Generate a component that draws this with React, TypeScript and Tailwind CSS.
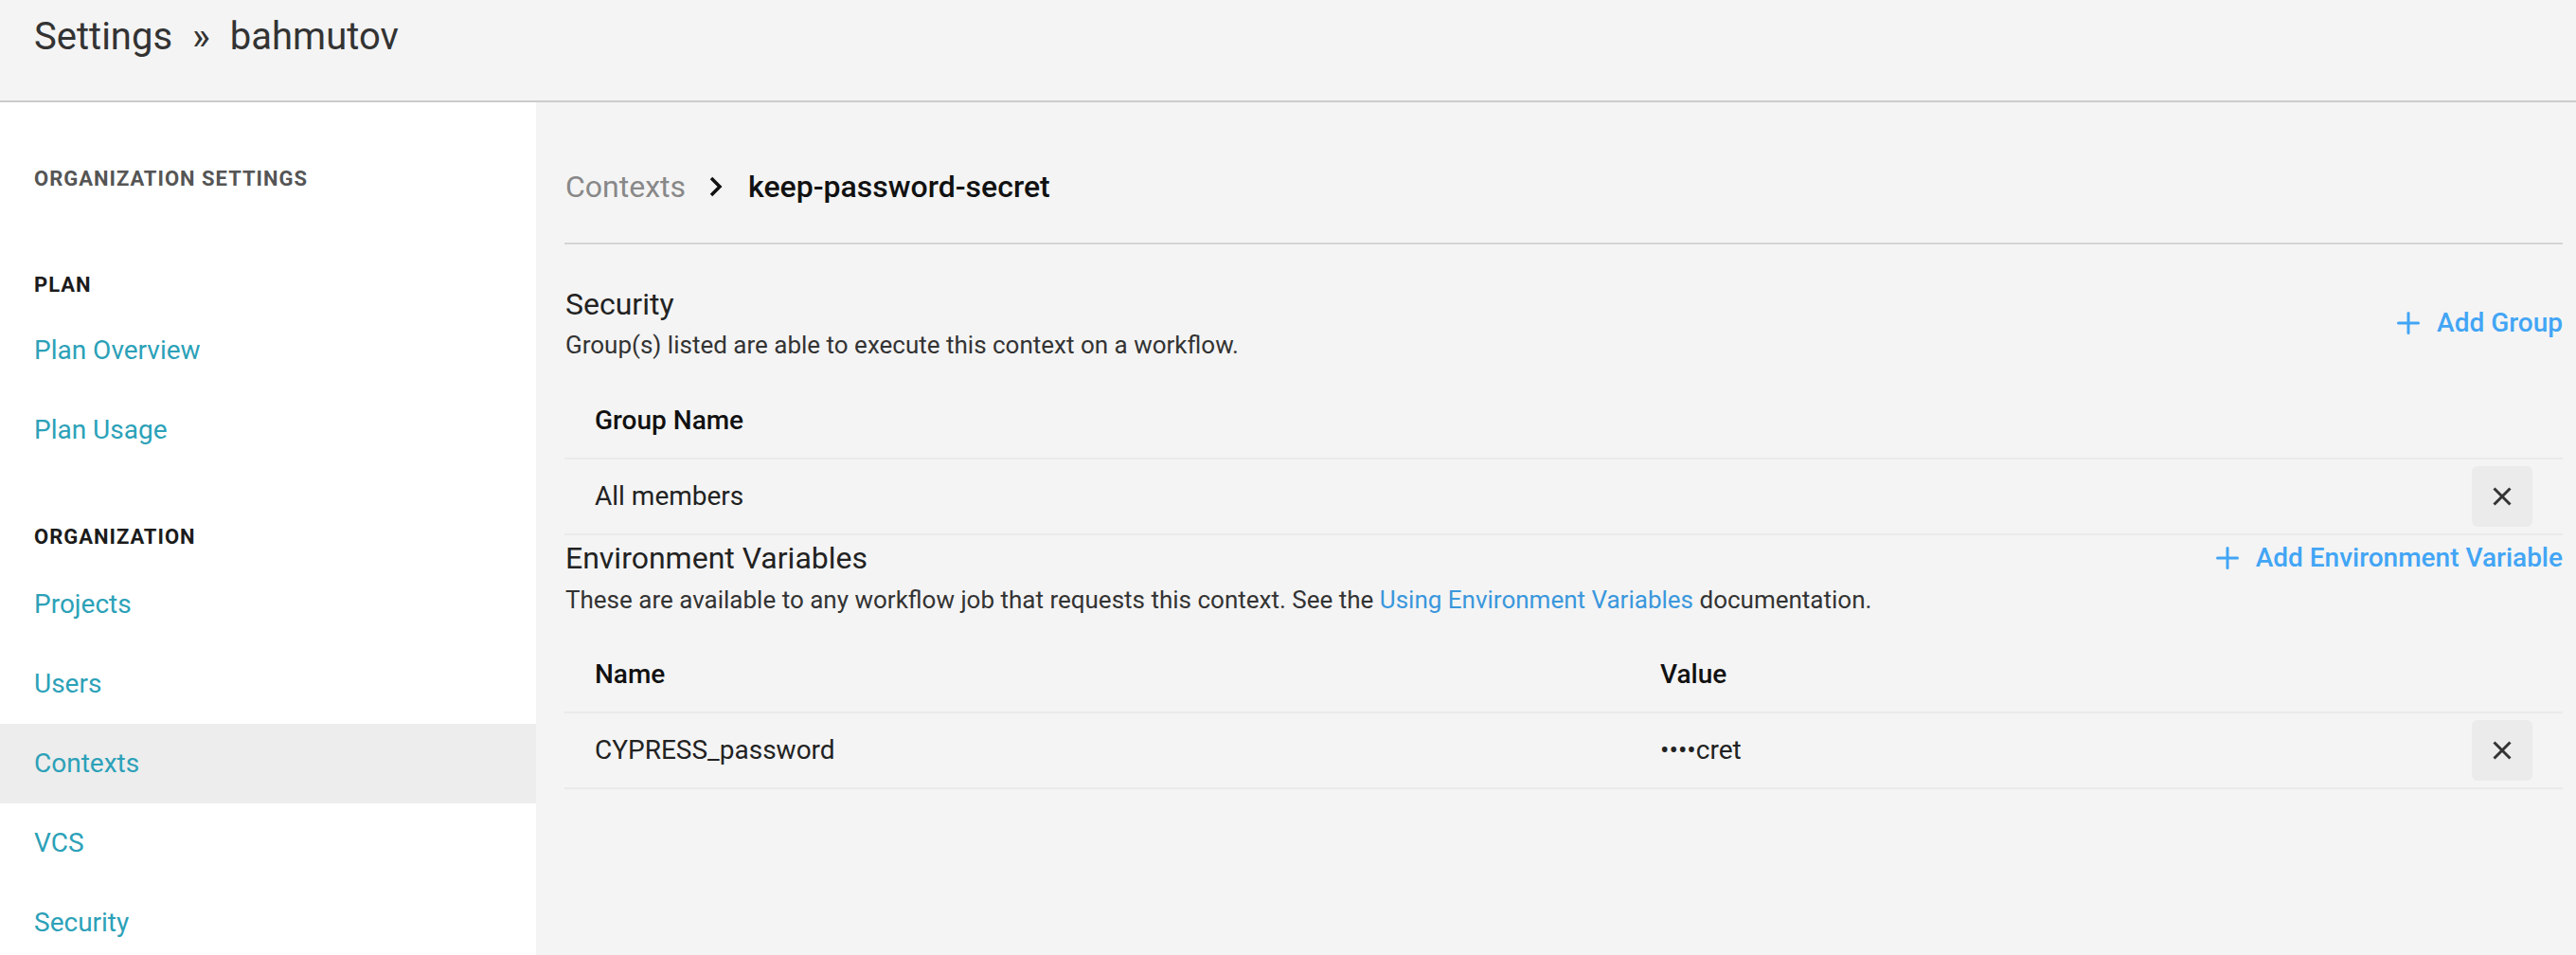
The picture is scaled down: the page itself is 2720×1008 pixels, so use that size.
import React from 'react';

const sections = [
  { title: 'Plan', items: ['Plan Overview', 'Plan Usage'] },
  { title: 'Organization', items: ['Projects', 'Users', 'Contexts', 'VCS', 'Security'] },
];

const PlusIcon = () => (
  <svg width="24" height="24" viewBox="0 0 24 24" fill="none" stroke="currentColor" strokeWidth="3" strokeLinecap="round">
    <line x1="12" y1="1.5" x2="12" y2="22.5" />
    <line x1="1.5" y1="12" x2="22.5" y2="12" />
  </svg>
);

const CloseButton = () => (
  <button className="w-[64px] h-[64px] rounded-[6px] bg-[#ebebeb] flex items-center justify-center text-[#333]">
    <svg width="20" height="20" viewBox="0 0 20 20" fill="none" stroke="currentColor" strokeWidth="3">
      <line x1="1.5" y1="1.5" x2="18.5" y2="18.5" />
      <line x1="18.5" y1="1.5" x2="1.5" y2="18.5" />
    </svg>
  </button>
);

const AddButton: React.FC<{ label: string }> = ({ label }) => (
  <button className="flex items-center gap-[18px] text-[#42a5f5] text-[28px] font-medium">
    <PlusIcon />
    <span>{label}</span>
  </button>
);

export default function App() {
  return (
    <div className="w-[2720px] h-[1008px] overflow-hidden flex flex-col bg-[#f4f4f4] font-['Roboto',sans-serif]">
      <header className="h-[108px] shrink-0 border-b-2 border-[#cccccc] pl-[36px] pt-[15px]">
        <h1 className="text-[40px] leading-[48px] text-[#333]">
          Settings<span className="mx-[21px]">»</span>bahmutov
        </h1>
      </header>

      <div className="flex flex-1 min-h-0">
        <aside className="w-[566px] shrink-0 bg-white pt-[64px]">
          <div className="h-[32px] flex items-center px-[36px] text-[22px] font-bold uppercase tracking-[0.045em] text-[#555]">
            Organization Settings
          </div>
          {sections.map((section, i) => (
            <div key={section.title} className={i === 0 ? 'mt-[80px]' : 'mt-[54px]'}>
              <div
                className={`h-[32px] flex items-center px-[36px] text-[22px] font-bold uppercase tracking-[0.045em] text-[#1b1b1b] ${
                  i === 0 ? 'mb-[12px]' : 'mb-[14px]'
                }`}
              >
                {section.title}
              </div>
              {section.items.map(item => (
                <div
                  key={item}
                  className={`h-[84px] flex items-center px-[36px] text-[28px] text-[#2ca1b8] ${
                    item === 'Contexts' ? 'bg-[#ededed]' : ''
                  }`}
                >
                  {item}
                </div>
              ))}
            </div>
          ))}
        </aside>

        <main className="flex-1 pl-[30px] pr-[14px] pt-[65px]">
          <div className="h-[48px] flex items-center text-[32px]">
            <span className="text-[#888] ml-[1px]">Contexts</span>
            <svg className="ml-[24px] mr-[26px] text-[#111]" width="16" height="22" viewBox="0 0 16 22" fill="none" stroke="currentColor" strokeWidth="3.5">
              <polyline points="3,2 12,11 3,20" />
            </svg>
            <span className="font-medium text-[#111]">keep-password-secret</span>
          </div>
          <div className="mt-[35px] h-[2px] bg-[#d4d4d4]" />

          {/* Security */}
          <section className="mt-[40px]">
            <div className="flex items-center justify-between">
              <div className="pl-[1px]">
                <h2 className="text-[32px] leading-[46px] text-[#222]">Security</h2>
                <p className="text-[26px] leading-[40px] text-[#333]">
                  Group(s) listed are able to execute this context on a workflow.
                </p>
              </div>
              <AddButton label="Add Group" />
            </div>
            <div className="mt-[21px]">
              <div className="h-[80px] flex items-center px-[32px] border-b-2 border-[#eaeaea] text-[28px] font-medium text-[#111]">
                Group Name
              </div>
              <div className="h-[80px] flex items-center justify-between px-[32px] border-b-2 border-[#eaeaea] text-[28px] text-[#222]">
                <span>All members</span>
                <CloseButton />
              </div>
            </div>
          </section>

          {/* Environment Variables */}
          <section>
            <div className="flex items-start justify-between">
              <div className="pl-[1px]">
                <h2 className="text-[32px] leading-[48px] text-[#222]">Environment Variables</h2>
                <p className="text-[26px] leading-[40px] text-[#333]">
                  These are available to any workflow job that requests this context. See the{' '}
                  <a className="text-[#3a97dc]">Using Environment Variables</a> documentation.
                </p>
              </div>
              <div className="h-[48px] flex items-center">
                <AddButton label="Add Environment Variable" />
              </div>
            </div>
            <div className="mt-[20px]">
              <div className="h-[80px] flex items-center border-b-2 border-[#eaeaea] text-[28px] font-medium text-[#111]">
                <div className="w-[1125px] pl-[32px]">Name</div>
                <div className="pl-[32px]">Value</div>
              </div>
              <div className="h-[80px] flex items-center border-b-2 border-[#eaeaea] text-[28px] text-[#222]">
                <div className="w-[1125px] pl-[32px]">CYPRESS_password</div>
                <div className="flex-1 pl-[32px]">••••cret</div>
                <div className="pr-[32px]">
                  <CloseButton />
                </div>
              </div>
            </div>
          </section>
        </main>
      </div>
    </div>
  );
}
